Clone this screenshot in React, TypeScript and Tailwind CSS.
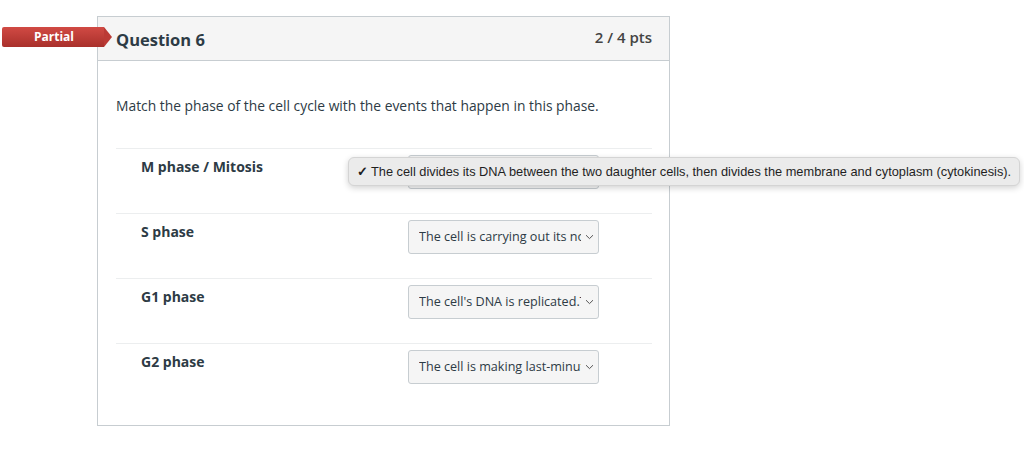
import React from "react";

const rows = [
  { label: "M phase / Mitosis", value: "The cell divides its DNA between the two daughter cells, then divides the membrane and cytoplasm (cytokinesis)." },
  { label: "S phase", value: "The cell is carrying out its normal functions" },
  { label: "G1 phase", value: "The cell's DNA is replicated.The" },
  { label: "G2 phase", value: "The cell is making last-minute" },
];

function Chevron() {
  return (
    <svg width="9" height="6" viewBox="0 0 9 6" className="shrink-0">
      <path d="M1 1.2 L4.5 4.6 L8 1.2" fill="none" stroke="#555" strokeWidth="1" />
    </svg>
  );
}

export default function App() {
  return (
    <div className="relative w-[1024px] h-[458px] bg-white overflow-hidden" style={{ fontFamily: '"Open Sans", sans-serif' }}>
      <div className="flex items-start pt-[16px]">
        <div className="w-[97px] shrink-0 relative">
          <div className="absolute left-[2px] top-[11px] flex items-center">
            <div className="w-[102px] h-[20px] rounded-l-[2px] bg-gradient-to-b from-[#d14a44] to-[#a9302b] flex items-center justify-center text-white text-[12px] font-bold pl-[2px]">
              Partial
            </div>
            <div className="w-0 h-0 border-y-[10px] border-y-transparent border-l-[8px] border-l-[#bb3a35]" />
          </div>
        </div>
        <div className="w-[573px] h-[410px] border border-[#c7cdd1] flex flex-col">
          <div className="h-[44px] bg-[#f5f5f5] border-b border-[#c7cdd1] flex items-start justify-between pl-[18px] pr-[17px]">
            <div className="text-[16.5px] font-bold text-[#2d3b45] mt-[11px]">Question 6</div>
            <div className="text-[15px] font-semibold text-[#444] mt-[9px]">2 / 4 pts</div>
          </div>
          <div className="pl-[18px] pr-[17px]">
            <div className="text-[13.85px] text-[#2d3b45] mt-[35px] leading-[20px]">
              Match the phase of the cell cycle with the events that happen in this phase.
            </div>
            <div className="mt-[32px]">
              {rows.map((r, i) => (
                <div key={i} className="h-[65px] border-t border-[#eceeef] flex items-start">
                  <div className="w-[292px] pl-[25px] pt-[8px] text-[14px] font-bold text-[#2d3b45] leading-[20px]">
                    {r.label}
                  </div>
                  <div className="mt-[6px] w-[191px] h-[34px] bg-[#f5f5f5] border border-[#c7cdd1] rounded-[3px] flex items-center pl-[10px] pr-[4px] gap-[4px]">
                    <span className="flex-1 overflow-hidden whitespace-nowrap text-[12.6px] text-[#2d3b45]">{r.value}</span>
                    <Chevron />
                  </div>
                </div>
              ))}
            </div>
          </div>
        </div>
      </div>
      <div
        className="absolute left-[348px] top-[157px] w-[672px] h-[29px] rounded-[6px] bg-[#ebebeb] border border-[#d4d4d4] shadow-[0_2px_6px_rgba(0,0,0,0.18)] flex items-center pl-[8px] text-[12.8px] text-[#1f1f1f] whitespace-nowrap"
        style={{ fontFamily: '"Liberation Sans", Arial, sans-serif' }}
      >
        <span className="font-bold mr-[3px]">✓</span>The cell divides its DNA between the two daughter cells, then divides the membrane and cytoplasm (cytokinesis).
      </div>
    </div>
  );
}
